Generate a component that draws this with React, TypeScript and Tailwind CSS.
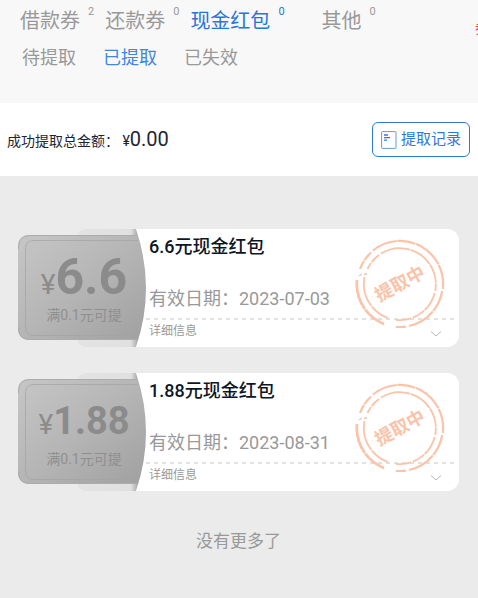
import { useState } from 'react'
import clsx from 'clsx'

interface Coupon {
  amount: string
  expires: string
  large: boolean
}

const TABS = [
  { name: '借款券', count: 2 },
  { name: '还款券', count: 0 },
  { name: '现金红包', count: 0 },
  { name: '其他', count: 0 },
]

const STATUSES = ['待提取', '已提取', '已失效']

const COUPONS: Coupon[] = [
  { amount: '6.6', expires: '2023-07-03', large: true },
  { amount: '1.88', expires: '2023-08-31', large: false },
]

function RecordIcon() {
  return (
    <svg width="16" height="18" viewBox="0 0 16 18" fill="none" stroke="#2f78d8" aria-hidden="true">
      <rect x="0.6" y="0.6" width="14.4" height="16.8" rx="1" strokeOpacity="0.75" />
      <path d="M3 4h4M3 6.6h6M3 9.2h3" strokeWidth="1.3" />
    </svg>
  )
}

function TicketArt() {
  return (
    <svg
      className="absolute inset-0 h-full w-full"
      viewBox="0 0 128 118"
      preserveAspectRatio="none"
      aria-hidden="true"
    >
      <defs>
        <linearGradient id="ticketFill" x1="0" y1="0" x2="1" y2="1">
          <stop offset="0" stopColor="#c6c6c6" />
          <stop offset="0.5" stopColor="#b5b5b5" />
          <stop offset="1" stopColor="#a0a0a0" />
        </linearGradient>
        <linearGradient id="backFill" x1="0" y1="0" x2="1" y2="0">
          <stop offset="0" stopColor="#e3e3e3" />
          <stop offset="0.84" stopColor="#e0e0e0" />
          <stop offset="1" stopColor="#8f8f8f" />
        </linearGradient>
      </defs>
      <path d="M68 0H123V118H68Q59 117 59 108V10Q59 1 68 0Z" fill="url(#backFill)" />
      <path d="M12 6H128V111H12Q0 111 0 99V18Q0 6 12 6Z" fill="url(#ticketFill)" />
      <path d="M0.5 20V18Q0.5 6.5 12 6.5H119M0.5 98V99Q0.5 110.5 12 110.5H119" fill="none" stroke="#acacac" />
      <path
        d="M120 11.5H16Q7.5 11.5 7.5 20V97Q7.5 106.5 16 106.5H120"
        fill="none"
        stroke="#a2a2a2"
        strokeOpacity="0.7"
      />
      <path d="M118 0Q138 59 118 118H128V0Z" fill="#fff" />
    </svg>
  )
}

function Stamp() {
  return (
    <div className="pointer-events-none absolute top-[10px] right-[14px] h-[90px] w-[90px]">
      <svg
        className="absolute inset-0"
        viewBox="0 0 90 90"
        fill="none"
        stroke="#fbc3a9"
        aria-hidden="true"
      >
        <g strokeWidth="2.2">
          <path d="M5 30A43 43 0 0 1 16 13.5" strokeDasharray="9 0.8 12 1" />
          <path d="M18 11.5A43 43 0 0 1 87.8 50" strokeDasharray="26 0.7 18 0.6 31 0.7" />
          <path d="M87.2 52A43 43 0 0 1 54 87" strokeDasharray="22 0.7 30 1" />
          <path d="M51 87.6A43 43 0 0 1 41 87.8" />
          <path d="M29 85A43 43 0 0 1 2 41" strokeWidth="2.8" strokeDasharray="24 0.7 40 1" />
          <path d="M4 37L7 35" strokeWidth="1.4" />
        </g>
        <g strokeWidth="1.8">
          <path d="M12.5 30A36 36 0 0 1 24 16" strokeDasharray="7 1 12 1" />
          <path d="M26 14.5A36 36 0 0 1 80.2 52" strokeDasharray="30 0.7 24 0.6 20 0.7" />
          <path d="M79.7 54A36 36 0 0 1 58 78.6" strokeDasharray="20 0.7" />
          <path d="M56 79.3A36 36 0 0 1 41 80.8" />
          <path d="M33 79A36 36 0 0 1 9.5 38" strokeDasharray="20 0.8 40 1" />
          <path d="M9 35.5L12 34.5" />
        </g>
      </svg>
      <span className="absolute inset-0 flex items-center justify-center text-lg font-bold text-[#fbc3a9] -rotate-[29deg]">
        提取中
      </span>
    </div>
  )
}

function CouponCard({ coupon }: { coupon: Coupon }) {
  const [open, setOpen] = useState(false)

  return (
    <li className="flex">
      <div className="relative w-32 shrink-0">
        <TicketArt />
        <div className="relative flex h-[76px] items-baseline justify-center pt-[18px] pl-1 text-[#8b8b8b]">
          <span className="text-[28px] leading-[60px]">¥</span>
          <span
            className={clsx(
              'font-bold leading-[60px]',
              coupon.large ? 'text-[50px]' : 'text-[38px]',
            )}
          >
            {coupon.amount}
          </span>
        </div>
        <p className="relative pl-1 text-center text-sm text-[#8f8f8f]">满0.1元可提</p>
      </div>

      <div className="relative min-w-0 flex-1 rounded-r-xl bg-white pt-[5px]">
        <h2 className="pl-[3px] text-lg leading-[26px] font-medium text-[#0d1626]">
          {coupon.amount}元现金红包
        </h2>
        <p className="mt-[26px] pl-[3px] text-lg leading-[26px] text-[#999]">
          有效日期：{coupon.expires}
        </p>
        <div className="mt-1.5 mr-[3px] h-0.5 bg-[repeating-linear-gradient(to_right,#e2e2e2_0_4px,transparent_4px_8px)]" />
        <button
          type="button"
          onClick={() => setOpen(!open)}
          aria-expanded={open}
          className="flex w-full items-start justify-between pr-[17px] pb-[5px] pl-[3px] text-xs leading-[22px] text-[#999]"
        >
          详细信息
          <svg className="mt-[11px]" width="12" height="6" viewBox="0 0 12 6" fill="none" stroke="#b5b5b5" aria-hidden="true">
            <path d="M1 0.5L6 5L11 0.5" />
          </svg>
        </button>
        <Stamp />
      </div>
    </li>
  )
}

export default function App() {
  const [tab, setTab] = useState('现金红包')
  const [status, setStatus] = useState('已提取')

  return (
    <div className="min-h-screen bg-[#ebebeb] font-[Roboto,'Noto_Sans_CJK_SC',sans-serif]">
      {/* Tabs */}
      <header className="bg-[#f8f8f8] pt-1.5 pb-8">
        <nav className="flex items-start gap-[11px] pl-5">
          {TABS.map((t) => (
            <button
              key={t.name}
              type="button"
              onClick={() => setTab(t.name)}
              className={clsx(
                'flex shrink-0 items-start gap-2 text-xl leading-[30px] last-of-type:ml-[26px]',
                t.name === tab ? 'text-[#2a73dc]' : 'text-[#999]',
              )}
            >
              {t.name}
              <span className="text-[11px] leading-3">{t.count}</span>
            </button>
          ))}
          <a href="#rules" className="mt-3 ml-auto w-[3px] overflow-hidden text-sm leading-5 whitespace-nowrap text-[#f04040]">
            券
          </a>
        </nav>
        <nav className="mt-1.5 flex gap-[27px] pl-[22px]">
          {STATUSES.map((s) => (
            <button
              key={s}
              type="button"
              onClick={() => setStatus(s)}
              className={clsx(
                'text-lg leading-[27px]',
                s === status ? 'text-[#3f86de]' : 'text-[#999]',
              )}
            >
              {s}
            </button>
          ))}
        </nav>
      </header>

      {/* Total */}
      <section className="flex items-center justify-between bg-white py-[19px] pr-2 pl-[7px]">
        <p className="pb-0.5 text-sm text-[#1c2534]">
          成功提取总金额： ¥<span className="text-xl">0.00</span>
        </p>
        <button
          type="button"
          className="flex h-[35px] items-center gap-1 rounded-md border border-[#2f78d8] px-2 text-[15px] text-[#2f78d8]"
        >
          <RecordIcon />
          提取记录
        </button>
      </section>

      {/* Coupons */}
      <main className="pt-[53px] pr-[19px] pb-11 pl-[18px]">
        <ul className="space-y-[26px]">
          {COUPONS.map((c) => (
            <CouponCard key={c.amount} coupon={c} />
          ))}
        </ul>
        <p className="mt-[38px] text-center text-[17px] leading-6 text-[#999]">没有更多了</p>
      </main>
    </div>
  )
}
